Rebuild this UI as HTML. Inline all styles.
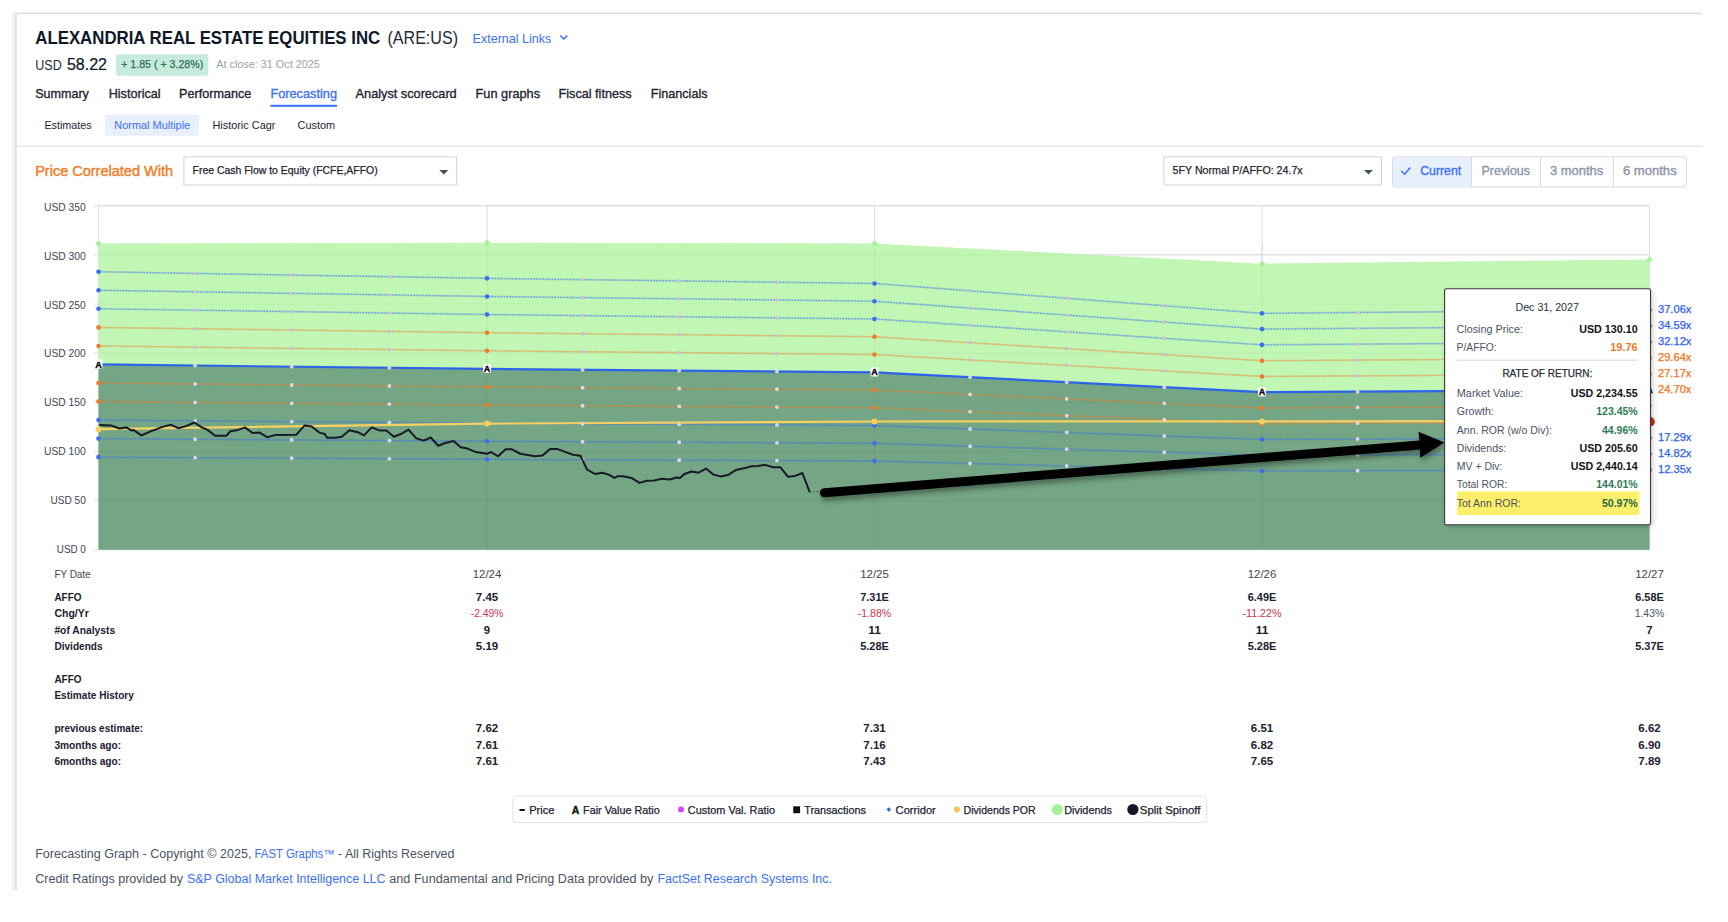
<!DOCTYPE html>
<html><head><meta charset="utf-8"><title>ARE Forecasting</title>
<style>html,body{margin:0;padding:0;background:#fff;width:1728px;height:922px;overflow:hidden}svg{display:block;font-family:"Liberation Sans", sans-serif}</style>
</head><body>
<svg width="1728" height="922" viewBox="0 0 1728 922">
<defs>
<filter id="blur" x="-5%" y="-50%" width="110%" height="200%"><feGaussianBlur stdDeviation="2.5"/></filter>
<filter id="shadow" x="-10%" y="-10%" width="130%" height="130%"><feDropShadow dx="2" dy="2" stdDeviation="2.5" flood-color="#000" flood-opacity="0.18"/></filter>
</defs>
<rect x="0" y="0" width="1728" height="922" fill="#ffffff"/>
<rect x="12" y="12" width="1690" height="878" fill="#f1f2f4"/>
<rect x="15" y="13" width="1687" height="877" rx="2" fill="#ffffff"/>
<rect x="15" y="13" width="1687" height="1.2" fill="#d9dce3"/>
<rect x="15" y="13" width="1.8" height="877" fill="#dde0e6"/>
<text x="35.3" y="43.8" font-size="19" fill="#0f1729" font-weight="bold" text-anchor="start" textLength="344.9" lengthAdjust="spacingAndGlyphs">ALEXANDRIA REAL ESTATE EQUITIES INC</text>
<text x="387.5" y="43.8" font-size="19" fill="#1f2937" font-weight="normal" text-anchor="start" textLength="70.5" lengthAdjust="spacingAndGlyphs">(ARE:US)</text>
<text x="472.6" y="42.7" font-size="13" fill="#3b6ff5" font-weight="normal" text-anchor="start" textLength="78.6" lengthAdjust="spacingAndGlyphs">External Links</text>
<path d="M560.3 35.6 L563.8 39.1 L567.3 35.6" fill="none" stroke="#3b6ff5" stroke-width="1.4"/>
<text x="35.3" y="69.8" font-size="13.8" fill="#1f2937" font-weight="normal" text-anchor="start" textLength="26.5" lengthAdjust="spacingAndGlyphs">USD</text>
<text x="66.9" y="69.8" font-size="15.6" fill="#0f1729" font-weight="normal" text-anchor="start" textLength="40.1" lengthAdjust="spacingAndGlyphs" stroke="#0f1729" stroke-width="0.2">58.22</text>
<rect x="116.1" y="54.2" width="92.2" height="21.5" rx="2" fill="#c6eadc"/>
<text x="121.2" y="67.7" font-size="11" fill="#2f6f55" font-weight="normal" text-anchor="start" textLength="82.0" lengthAdjust="spacingAndGlyphs" stroke="#2f6f55" stroke-width="0.25">+ 1.85 ( + 3.28%)</text>
<text x="216.3" y="68.0" font-size="11" fill="#9aa0b0" font-weight="normal" text-anchor="start" textLength="103.5" lengthAdjust="spacingAndGlyphs">At close: 31 Oct 2025</text>
<text x="35.2" y="97.8" font-size="13.3" fill="#1f2330" font-weight="normal" text-anchor="start" textLength="53.7" lengthAdjust="spacingAndGlyphs" stroke="#1f2330" stroke-width="0.35">Summary</text>
<text x="108.7" y="97.8" font-size="13.3" fill="#1f2330" font-weight="normal" text-anchor="start" textLength="51.9" lengthAdjust="spacingAndGlyphs" stroke="#1f2330" stroke-width="0.35">Historical</text>
<text x="179.0" y="97.8" font-size="13.3" fill="#1f2330" font-weight="normal" text-anchor="start" textLength="72.3" lengthAdjust="spacingAndGlyphs" stroke="#1f2330" stroke-width="0.35">Performance</text>
<text x="270.4" y="97.8" font-size="13.3" fill="#3b6ff5" font-weight="normal" text-anchor="start" textLength="66.6" lengthAdjust="spacingAndGlyphs" stroke="#3b6ff5" stroke-width="0.35">Forecasting</text>
<text x="355.6" y="97.8" font-size="13.3" fill="#1f2330" font-weight="normal" text-anchor="start" textLength="101.1" lengthAdjust="spacingAndGlyphs" stroke="#1f2330" stroke-width="0.35">Analyst scorecard</text>
<text x="475.6" y="97.8" font-size="13.3" fill="#1f2330" font-weight="normal" text-anchor="start" textLength="64.4" lengthAdjust="spacingAndGlyphs" stroke="#1f2330" stroke-width="0.35">Fun graphs</text>
<text x="558.5" y="97.8" font-size="13.3" fill="#1f2330" font-weight="normal" text-anchor="start" textLength="73.2" lengthAdjust="spacingAndGlyphs" stroke="#1f2330" stroke-width="0.35">Fiscal fitness</text>
<text x="650.7" y="97.8" font-size="13.3" fill="#1f2330" font-weight="normal" text-anchor="start" textLength="56.9" lengthAdjust="spacingAndGlyphs" stroke="#1f2330" stroke-width="0.35">Financials</text>
<rect x="270.4" y="104.8" width="66.6" height="2" fill="#3b6ff5"/>
<rect x="105" y="115" width="93.9" height="20.8" rx="2" fill="#e8effd"/>
<text x="44.4" y="128.9" font-size="11" fill="#1f2330" font-weight="normal" text-anchor="start" textLength="47.3" lengthAdjust="spacingAndGlyphs">Estimates</text>
<text x="114.3" y="128.9" font-size="11" fill="#3b6ff5" font-weight="normal" text-anchor="start" textLength="75.9" lengthAdjust="spacingAndGlyphs">Normal Multiple</text>
<text x="212.4" y="128.9" font-size="11" fill="#1f2330" font-weight="normal" text-anchor="start" textLength="63.0" lengthAdjust="spacingAndGlyphs">Historic Cagr</text>
<text x="297.6" y="128.9" font-size="11" fill="#1f2330" font-weight="normal" text-anchor="start" textLength="37.6" lengthAdjust="spacingAndGlyphs">Custom</text>
<rect x="16.5" y="145.6" width="1685.5" height="1.2" fill="#dfe2e8"/>
<text x="35.2" y="176.2" font-size="13.8" fill="#ef7b22" font-weight="normal" text-anchor="start" textLength="137.8" lengthAdjust="spacingAndGlyphs" stroke="#ef7b22" stroke-width="0.35">Price Correlated With</text>
<rect x="183.9" y="156.9" width="272.5" height="28" fill="#fff" stroke="#cfd3dc" stroke-width="1"/>
<text x="192.6" y="174.0" font-size="11" fill="#1f2330" font-weight="normal" text-anchor="start" textLength="185.1" lengthAdjust="spacingAndGlyphs" stroke="#1f2330" stroke-width="0.25">Free Cash Flow to Equity (FCFE,AFFO)</text>
<path d="M439.3 170 L448.3 170 L443.8 174.5 Z" fill="#4a4f5c"/>
<rect x="1163.9" y="156.9" width="217.5" height="28" fill="#fff" stroke="#cfd3dc" stroke-width="1"/>
<text x="1172.6" y="174.0" font-size="11" fill="#1f2330" font-weight="normal" text-anchor="start" textLength="130.1" lengthAdjust="spacingAndGlyphs" stroke="#1f2330" stroke-width="0.25">5FY Normal P/AFFO: 24.7x</text>
<path d="M1364 170 L1373 170 L1368.5 174.5 Z" fill="#4a4f5c"/>
<rect x="1392.4" y="156.9" width="294" height="30" rx="3" fill="#fff" stroke="#d3d7df" stroke-width="1"/>
<path d="M1395.4 157.4 H1471.6 V186.9 H1395.4 Q1392.9 186.9 1392.9 184 V160.4 Q1392.9 157.4 1395.4 157.4 Z" fill="#e8effd"/>
<rect x="1471.1" y="157" width="1" height="29.5" fill="#d3d7df"/>
<rect x="1540.0" y="157" width="1" height="29.5" fill="#d3d7df"/>
<rect x="1612.9" y="157" width="1" height="29.5" fill="#d3d7df"/>
<path d="M1401.3 171 L1404.6 174.2 L1410.3 167.6" fill="none" stroke="#3b6ff5" stroke-width="1.5"/>
<text x="1420.2" y="175.2" font-size="13" fill="#3b6ff5" font-weight="normal" text-anchor="start" textLength="41.0" lengthAdjust="spacingAndGlyphs" stroke="#3b6ff5" stroke-width="0.35">Current</text>
<text x="1481.6" y="175.2" font-size="13" fill="#8b93a7" font-weight="normal" text-anchor="start" textLength="48.3" lengthAdjust="spacingAndGlyphs" stroke="#8b93a7" stroke-width="0.35">Previous</text>
<text x="1550.0" y="175.2" font-size="13" fill="#8b93a7" font-weight="normal" text-anchor="start" textLength="53.2" lengthAdjust="spacingAndGlyphs" stroke="#8b93a7" stroke-width="0.35">3 months</text>
<text x="1622.9" y="175.2" font-size="13" fill="#8b93a7" font-weight="normal" text-anchor="start" textLength="53.8" lengthAdjust="spacingAndGlyphs" stroke="#8b93a7" stroke-width="0.35">6 months</text>
<rect x="94" y="549.30" width="1555.5" height="1" fill="#dcdfe7"/>
<rect x="94" y="500.14" width="1555.5" height="1" fill="#dcdfe7"/>
<rect x="94" y="450.99" width="1555.5" height="1" fill="#dcdfe7"/>
<rect x="94" y="401.83" width="1555.5" height="1" fill="#dcdfe7"/>
<rect x="94" y="352.67" width="1555.5" height="1" fill="#dcdfe7"/>
<rect x="94" y="303.51" width="1555.5" height="1" fill="#dcdfe7"/>
<rect x="94" y="254.36" width="1555.5" height="1" fill="#dcdfe7"/>
<rect x="94" y="205.20" width="1555.5" height="1" fill="#dcdfe7"/>
<rect x="98.0" y="205.7" width="1" height="344.1" fill="#dcdfe7"/>
<rect x="486.54620123203284" y="205.7" width="1" height="344.1" fill="#dcdfe7"/>
<rect x="874.0308008213552" y="205.7" width="1" height="344.1" fill="#dcdfe7"/>
<rect x="1261.5154004106776" y="205.7" width="1" height="344.1" fill="#dcdfe7"/>
<rect x="1649.0" y="205.7" width="1" height="344.1" fill="#dcdfe7"/>
<polygon points="98.5,243.5 487.04620123203284,242.8 874.5308008213552,243.4 1262.0154004106776,263.7 1649.5,259.5 1649.5,549.8 98.5,549.8" fill="#c1f6b4"/>
<polygon points="98.5,364.47 487.04620123203284,368.89 874.5308008213552,372.29 1262.0154004106776,392.20 1649.5,390.01 1649.5,549.8 98.5,549.8" fill="#74a584"/>
<rect x="98.5" y="500.14" width="1551" height="1" fill="#000" opacity="0.04"/>
<rect x="98.5" y="450.99" width="1551" height="1" fill="#000" opacity="0.04"/>
<rect x="98.5" y="401.83" width="1551" height="1" fill="#000" opacity="0.04"/>
<rect x="98.5" y="352.67" width="1551" height="1" fill="#000" opacity="0.04"/>
<rect x="98.5" y="303.51" width="1551" height="1" fill="#000" opacity="0.04"/>
<rect x="98.5" y="254.36" width="1551" height="1" fill="#000" opacity="0.04"/>
<rect x="98.5" y="205.20" width="1551" height="1" fill="#000" opacity="0.04"/>
<rect x="486.54620123203284" y="243" width="1" height="306.5" fill="#000" opacity="0.05"/>
<rect x="874.0308008213552" y="243" width="1" height="306.5" fill="#000" opacity="0.05"/>
<rect x="1261.5154004106776" y="243" width="1" height="306.5" fill="#000" opacity="0.05"/>
<polyline points="98.5,271.73 487.04620123203284,278.36 874.5308008213552,283.46 1262.0154004106776,313.34 1649.5,310.06" fill="none" stroke="#3a6ef2" stroke-width="2" opacity="0.18"/>
<polyline points="98.5,271.73 487.04620123203284,278.36 874.5308008213552,283.46 1262.0154004106776,313.34 1649.5,310.06" fill="none" stroke="#3a6ef2" stroke-width="1.3" stroke-dasharray="1.6 1.4" opacity="0.55"/>
<polyline points="98.5,290.26 487.04620123203284,296.45 874.5308008213552,301.21 1262.0154004106776,329.10 1649.5,326.03" fill="none" stroke="#3a6ef2" stroke-width="2" opacity="0.18"/>
<polyline points="98.5,290.26 487.04620123203284,296.45 874.5308008213552,301.21 1262.0154004106776,329.10 1649.5,326.03" fill="none" stroke="#3a6ef2" stroke-width="1.3" stroke-dasharray="1.6 1.4" opacity="0.55"/>
<polyline points="98.5,308.79 487.04620123203284,314.54 874.5308008213552,318.96 1262.0154004106776,344.86 1649.5,342.01" fill="none" stroke="#3a6ef2" stroke-width="2" opacity="0.18"/>
<polyline points="98.5,308.79 487.04620123203284,314.54 874.5308008213552,318.96 1262.0154004106776,344.86 1649.5,342.01" fill="none" stroke="#3a6ef2" stroke-width="1.3" stroke-dasharray="1.6 1.4" opacity="0.55"/>
<polyline points="98.5,327.40 487.04620123203284,332.70 874.5308008213552,336.78 1262.0154004106776,360.68 1649.5,358.06" fill="none" stroke="#f07a28" stroke-width="2" opacity="0.18"/>
<polyline points="98.5,327.40 487.04620123203284,332.70 874.5308008213552,336.78 1262.0154004106776,360.68 1649.5,358.06" fill="none" stroke="#f07a28" stroke-width="1.3" stroke-dasharray="1.6 1.4" opacity="0.55"/>
<polyline points="98.5,345.93 487.04620123203284,350.80 874.5308008213552,354.54 1262.0154004106776,376.44 1649.5,374.04" fill="none" stroke="#f07a28" stroke-width="2" opacity="0.18"/>
<polyline points="98.5,345.93 487.04620123203284,350.80 874.5308008213552,354.54 1262.0154004106776,376.44 1649.5,374.04" fill="none" stroke="#f07a28" stroke-width="1.3" stroke-dasharray="1.6 1.4" opacity="0.55"/>
<polyline points="98.5,364.47 487.04620123203284,368.89 874.5308008213552,372.29 1262.0154004106776,392.20 1649.5,390.01" fill="none" stroke="#2f62ea" stroke-width="2.2"/>
<polyline points="98.5,383.00 487.04620123203284,386.98 874.5308008213552,390.04 1262.0154004106776,407.96 1649.5,405.99" fill="none" stroke="#f07a28" stroke-width="2" opacity="0.18"/>
<polyline points="98.5,383.00 487.04620123203284,386.98 874.5308008213552,390.04 1262.0154004106776,407.96 1649.5,405.99" fill="none" stroke="#f07a28" stroke-width="1.3" stroke-dasharray="1.6 1.4" opacity="0.55"/>
<polyline points="98.5,401.53 487.04620123203284,405.07 874.5308008213552,407.79 1262.0154004106776,423.72 1649.5,421.97" fill="none" stroke="#f07a28" stroke-width="2" opacity="0.18"/>
<polyline points="98.5,401.53 487.04620123203284,405.07 874.5308008213552,407.79 1262.0154004106776,423.72 1649.5,421.97" fill="none" stroke="#f07a28" stroke-width="1.3" stroke-dasharray="1.6 1.4" opacity="0.55"/>
<polyline points="98.5,420.07 487.04620123203284,423.16 874.5308008213552,425.54 1262.0154004106776,439.48 1649.5,437.95" fill="none" stroke="#3a6ef2" stroke-width="2" opacity="0.18"/>
<polyline points="98.5,420.07 487.04620123203284,423.16 874.5308008213552,425.54 1262.0154004106776,439.48 1649.5,437.95" fill="none" stroke="#3a6ef2" stroke-width="1.3" stroke-dasharray="1.6 1.4" opacity="0.55"/>
<polyline points="98.5,438.60 487.04620123203284,441.25 874.5308008213552,443.29 1262.0154004106776,455.24 1649.5,453.93" fill="none" stroke="#3a6ef2" stroke-width="2" opacity="0.18"/>
<polyline points="98.5,438.60 487.04620123203284,441.25 874.5308008213552,443.29 1262.0154004106776,455.24 1649.5,453.93" fill="none" stroke="#3a6ef2" stroke-width="1.3" stroke-dasharray="1.6 1.4" opacity="0.55"/>
<polyline points="98.5,457.13 487.04620123203284,459.34 874.5308008213552,461.04 1262.0154004106776,471.00 1649.5,469.91" fill="none" stroke="#3a6ef2" stroke-width="2" opacity="0.18"/>
<polyline points="98.5,457.13 487.04620123203284,459.34 874.5308008213552,461.04 1262.0154004106776,471.00 1649.5,469.91" fill="none" stroke="#3a6ef2" stroke-width="1.3" stroke-dasharray="1.6 1.4" opacity="0.55"/>
<polyline points="98.5,429.2 487.04620123203284,423.6 874.5308008213552,421.5 1262.0154004106776,421.4 1649.5,421.0" fill="none" stroke="#f6d062" stroke-width="2.2"/>
<circle cx="98.5" cy="271.73" r="2.3" fill="#3a6ef2"/>
<circle cx="195.1" cy="273.37" r="1.9" fill="#cdbfd8"/>
<circle cx="291.7" cy="275.02" r="1.9" fill="#cdbfd8"/>
<circle cx="389.4" cy="276.69" r="1.9" fill="#cdbfd8"/>
<circle cx="487.0" cy="278.36" r="2.3" fill="#3a6ef2"/>
<circle cx="582.6" cy="279.61" r="1.9" fill="#cdbfd8"/>
<circle cx="679.2" cy="280.89" r="1.9" fill="#cdbfd8"/>
<circle cx="776.9" cy="282.17" r="1.9" fill="#cdbfd8"/>
<circle cx="874.5" cy="283.46" r="2.3" fill="#3a6ef2"/>
<circle cx="970.1" cy="290.83" r="1.9" fill="#cdbfd8"/>
<circle cx="1066.7" cy="298.27" r="1.9" fill="#cdbfd8"/>
<circle cx="1164.3" cy="305.80" r="1.9" fill="#cdbfd8"/>
<circle cx="1262.0" cy="313.34" r="2.3" fill="#3a6ef2"/>
<circle cx="1357.6" cy="312.53" r="1.9" fill="#cdbfd8"/>
<circle cx="1454.2" cy="311.71" r="1.9" fill="#cdbfd8"/>
<circle cx="1551.8" cy="310.88" r="1.9" fill="#cdbfd8"/>
<circle cx="1649.5" cy="310.06" r="2.3" fill="#3a6ef2"/>
<circle cx="98.5" cy="290.26" r="2.3" fill="#3a6ef2"/>
<circle cx="195.1" cy="291.80" r="1.9" fill="#cdbfd8"/>
<circle cx="291.7" cy="293.34" r="1.9" fill="#cdbfd8"/>
<circle cx="389.4" cy="294.89" r="1.9" fill="#cdbfd8"/>
<circle cx="487.0" cy="296.45" r="2.3" fill="#3a6ef2"/>
<circle cx="582.6" cy="297.62" r="1.9" fill="#cdbfd8"/>
<circle cx="679.2" cy="298.81" r="1.9" fill="#cdbfd8"/>
<circle cx="776.9" cy="300.01" r="1.9" fill="#cdbfd8"/>
<circle cx="874.5" cy="301.21" r="2.3" fill="#3a6ef2"/>
<circle cx="970.1" cy="308.09" r="1.9" fill="#cdbfd8"/>
<circle cx="1066.7" cy="315.04" r="1.9" fill="#cdbfd8"/>
<circle cx="1164.3" cy="322.07" r="1.9" fill="#cdbfd8"/>
<circle cx="1262.0" cy="329.10" r="2.3" fill="#3a6ef2"/>
<circle cx="1357.6" cy="328.34" r="1.9" fill="#cdbfd8"/>
<circle cx="1454.2" cy="327.58" r="1.9" fill="#cdbfd8"/>
<circle cx="1551.8" cy="326.81" r="1.9" fill="#cdbfd8"/>
<circle cx="1649.5" cy="326.03" r="2.3" fill="#3a6ef2"/>
<circle cx="98.5" cy="308.79" r="2.3" fill="#3a6ef2"/>
<circle cx="195.1" cy="310.22" r="1.9" fill="#cdbfd8"/>
<circle cx="291.7" cy="311.65" r="1.9" fill="#cdbfd8"/>
<circle cx="389.4" cy="313.10" r="1.9" fill="#cdbfd8"/>
<circle cx="487.0" cy="314.54" r="2.3" fill="#3a6ef2"/>
<circle cx="582.6" cy="315.63" r="1.9" fill="#cdbfd8"/>
<circle cx="679.2" cy="316.73" r="1.9" fill="#cdbfd8"/>
<circle cx="776.9" cy="317.85" r="1.9" fill="#cdbfd8"/>
<circle cx="874.5" cy="318.96" r="2.3" fill="#3a6ef2"/>
<circle cx="970.1" cy="325.35" r="1.9" fill="#cdbfd8"/>
<circle cx="1066.7" cy="331.80" r="1.9" fill="#cdbfd8"/>
<circle cx="1164.3" cy="338.33" r="1.9" fill="#cdbfd8"/>
<circle cx="1262.0" cy="344.86" r="2.3" fill="#3a6ef2"/>
<circle cx="1357.6" cy="344.15" r="1.9" fill="#cdbfd8"/>
<circle cx="1454.2" cy="343.45" r="1.9" fill="#cdbfd8"/>
<circle cx="1551.8" cy="342.73" r="1.9" fill="#cdbfd8"/>
<circle cx="1649.5" cy="342.01" r="2.3" fill="#3a6ef2"/>
<circle cx="98.5" cy="327.40" r="2.3" fill="#f07a28"/>
<circle cx="195.1" cy="328.72" r="1.9" fill="#cdbfd8"/>
<circle cx="291.7" cy="330.04" r="1.9" fill="#cdbfd8"/>
<circle cx="389.4" cy="331.37" r="1.9" fill="#cdbfd8"/>
<circle cx="487.0" cy="332.70" r="2.3" fill="#f07a28"/>
<circle cx="582.6" cy="333.71" r="1.9" fill="#cdbfd8"/>
<circle cx="679.2" cy="334.73" r="1.9" fill="#cdbfd8"/>
<circle cx="776.9" cy="335.76" r="1.9" fill="#cdbfd8"/>
<circle cx="874.5" cy="336.78" r="2.3" fill="#f07a28"/>
<circle cx="970.1" cy="342.68" r="1.9" fill="#cdbfd8"/>
<circle cx="1066.7" cy="348.63" r="1.9" fill="#cdbfd8"/>
<circle cx="1164.3" cy="354.66" r="1.9" fill="#cdbfd8"/>
<circle cx="1262.0" cy="360.68" r="2.3" fill="#f07a28"/>
<circle cx="1357.6" cy="360.03" r="1.9" fill="#cdbfd8"/>
<circle cx="1454.2" cy="359.38" r="1.9" fill="#cdbfd8"/>
<circle cx="1551.8" cy="358.72" r="1.9" fill="#cdbfd8"/>
<circle cx="1649.5" cy="358.06" r="2.3" fill="#f07a28"/>
<circle cx="98.5" cy="345.93" r="2.3" fill="#f07a28"/>
<circle cx="195.1" cy="347.14" r="1.9" fill="#cdbfd8"/>
<circle cx="291.7" cy="348.35" r="1.9" fill="#cdbfd8"/>
<circle cx="389.4" cy="349.57" r="1.9" fill="#cdbfd8"/>
<circle cx="487.0" cy="350.80" r="2.3" fill="#f07a28"/>
<circle cx="582.6" cy="351.72" r="1.9" fill="#cdbfd8"/>
<circle cx="679.2" cy="352.65" r="1.9" fill="#cdbfd8"/>
<circle cx="776.9" cy="353.59" r="1.9" fill="#cdbfd8"/>
<circle cx="874.5" cy="354.54" r="2.3" fill="#f07a28"/>
<circle cx="970.1" cy="359.94" r="1.9" fill="#cdbfd8"/>
<circle cx="1066.7" cy="365.40" r="1.9" fill="#cdbfd8"/>
<circle cx="1164.3" cy="370.92" r="1.9" fill="#cdbfd8"/>
<circle cx="1262.0" cy="376.44" r="2.3" fill="#f07a28"/>
<circle cx="1357.6" cy="375.85" r="1.9" fill="#cdbfd8"/>
<circle cx="1454.2" cy="375.25" r="1.9" fill="#cdbfd8"/>
<circle cx="1551.8" cy="374.64" r="1.9" fill="#cdbfd8"/>
<circle cx="1649.5" cy="374.04" r="2.3" fill="#f07a28"/>
<circle cx="195.1" cy="365.57" r="1.9" fill="#dcd8e4"/>
<circle cx="291.7" cy="366.67" r="1.9" fill="#dcd8e4"/>
<circle cx="389.4" cy="367.78" r="1.9" fill="#dcd8e4"/>
<circle cx="582.6" cy="369.73" r="1.9" fill="#dcd8e4"/>
<circle cx="679.2" cy="370.57" r="1.9" fill="#dcd8e4"/>
<circle cx="776.9" cy="371.43" r="1.9" fill="#dcd8e4"/>
<circle cx="970.1" cy="377.20" r="1.9" fill="#dcd8e4"/>
<circle cx="1066.7" cy="382.16" r="1.9" fill="#dcd8e4"/>
<circle cx="1164.3" cy="387.18" r="1.9" fill="#dcd8e4"/>
<circle cx="1357.6" cy="391.66" r="1.9" fill="#dcd8e4"/>
<circle cx="1454.2" cy="391.12" r="1.9" fill="#dcd8e4"/>
<circle cx="1551.8" cy="390.56" r="1.9" fill="#dcd8e4"/>
<circle cx="98.5" cy="383.00" r="2.3" fill="#f07a28"/>
<circle cx="195.1" cy="383.99" r="1.9" fill="#dcd8e4"/>
<circle cx="291.7" cy="384.98" r="1.9" fill="#dcd8e4"/>
<circle cx="389.4" cy="385.98" r="1.9" fill="#dcd8e4"/>
<circle cx="487.0" cy="386.98" r="2.3" fill="#f07a28"/>
<circle cx="582.6" cy="387.73" r="1.9" fill="#dcd8e4"/>
<circle cx="679.2" cy="388.50" r="1.9" fill="#dcd8e4"/>
<circle cx="776.9" cy="389.27" r="1.9" fill="#dcd8e4"/>
<circle cx="874.5" cy="390.04" r="2.3" fill="#f07a28"/>
<circle cx="970.1" cy="394.46" r="1.9" fill="#dcd8e4"/>
<circle cx="1066.7" cy="398.93" r="1.9" fill="#dcd8e4"/>
<circle cx="1164.3" cy="403.44" r="1.9" fill="#dcd8e4"/>
<circle cx="1262.0" cy="407.96" r="2.3" fill="#f07a28"/>
<circle cx="1357.6" cy="407.47" r="1.9" fill="#dcd8e4"/>
<circle cx="1454.2" cy="406.98" r="1.9" fill="#dcd8e4"/>
<circle cx="1551.8" cy="406.49" r="1.9" fill="#dcd8e4"/>
<circle cx="1649.5" cy="405.99" r="2.3" fill="#f07a28"/>
<circle cx="98.5" cy="401.53" r="2.3" fill="#f07a28"/>
<circle cx="195.1" cy="402.41" r="1.9" fill="#dcd8e4"/>
<circle cx="291.7" cy="403.29" r="1.9" fill="#dcd8e4"/>
<circle cx="389.4" cy="404.18" r="1.9" fill="#dcd8e4"/>
<circle cx="487.0" cy="405.07" r="2.3" fill="#f07a28"/>
<circle cx="582.6" cy="405.74" r="1.9" fill="#dcd8e4"/>
<circle cx="679.2" cy="406.42" r="1.9" fill="#dcd8e4"/>
<circle cx="776.9" cy="407.10" r="1.9" fill="#dcd8e4"/>
<circle cx="874.5" cy="407.79" r="2.3" fill="#f07a28"/>
<circle cx="970.1" cy="411.72" r="1.9" fill="#dcd8e4"/>
<circle cx="1066.7" cy="415.69" r="1.9" fill="#dcd8e4"/>
<circle cx="1164.3" cy="419.70" r="1.9" fill="#dcd8e4"/>
<circle cx="1262.0" cy="423.72" r="2.3" fill="#f07a28"/>
<circle cx="1357.6" cy="423.29" r="1.9" fill="#dcd8e4"/>
<circle cx="1454.2" cy="422.85" r="1.9" fill="#dcd8e4"/>
<circle cx="1551.8" cy="422.41" r="1.9" fill="#dcd8e4"/>
<circle cx="1649.5" cy="421.97" r="2.3" fill="#f07a28"/>
<circle cx="98.5" cy="420.07" r="2.3" fill="#3a6ef2"/>
<circle cx="195.1" cy="420.84" r="1.9" fill="#dcd8e4"/>
<circle cx="291.7" cy="421.61" r="1.9" fill="#dcd8e4"/>
<circle cx="389.4" cy="422.38" r="1.9" fill="#dcd8e4"/>
<circle cx="487.0" cy="423.16" r="2.3" fill="#3a6ef2"/>
<circle cx="582.6" cy="423.75" r="1.9" fill="#dcd8e4"/>
<circle cx="679.2" cy="424.34" r="1.9" fill="#dcd8e4"/>
<circle cx="776.9" cy="424.94" r="1.9" fill="#dcd8e4"/>
<circle cx="874.5" cy="425.54" r="2.3" fill="#3a6ef2"/>
<circle cx="970.1" cy="428.98" r="1.9" fill="#dcd8e4"/>
<circle cx="1066.7" cy="432.45" r="1.9" fill="#dcd8e4"/>
<circle cx="1164.3" cy="435.97" r="1.9" fill="#dcd8e4"/>
<circle cx="1262.0" cy="439.48" r="2.3" fill="#3a6ef2"/>
<circle cx="1357.6" cy="439.10" r="1.9" fill="#dcd8e4"/>
<circle cx="1454.2" cy="438.72" r="1.9" fill="#dcd8e4"/>
<circle cx="1551.8" cy="438.34" r="1.9" fill="#dcd8e4"/>
<circle cx="1649.5" cy="437.95" r="2.3" fill="#3a6ef2"/>
<circle cx="98.5" cy="438.60" r="2.3" fill="#3a6ef2"/>
<circle cx="195.1" cy="439.26" r="1.9" fill="#dcd8e4"/>
<circle cx="291.7" cy="439.92" r="1.9" fill="#dcd8e4"/>
<circle cx="389.4" cy="440.59" r="1.9" fill="#dcd8e4"/>
<circle cx="487.0" cy="441.25" r="2.3" fill="#3a6ef2"/>
<circle cx="582.6" cy="441.76" r="1.9" fill="#dcd8e4"/>
<circle cx="679.2" cy="442.26" r="1.9" fill="#dcd8e4"/>
<circle cx="776.9" cy="442.78" r="1.9" fill="#dcd8e4"/>
<circle cx="874.5" cy="443.29" r="2.3" fill="#3a6ef2"/>
<circle cx="970.1" cy="446.24" r="1.9" fill="#dcd8e4"/>
<circle cx="1066.7" cy="449.22" r="1.9" fill="#dcd8e4"/>
<circle cx="1164.3" cy="452.23" r="1.9" fill="#dcd8e4"/>
<circle cx="1262.0" cy="455.24" r="2.3" fill="#3a6ef2"/>
<circle cx="1357.6" cy="454.92" r="1.9" fill="#dcd8e4"/>
<circle cx="1454.2" cy="454.59" r="1.9" fill="#dcd8e4"/>
<circle cx="1551.8" cy="454.26" r="1.9" fill="#dcd8e4"/>
<circle cx="1649.5" cy="453.93" r="2.3" fill="#3a6ef2"/>
<circle cx="98.5" cy="457.13" r="2.3" fill="#3a6ef2"/>
<circle cx="195.1" cy="457.68" r="1.9" fill="#dcd8e4"/>
<circle cx="291.7" cy="458.23" r="1.9" fill="#dcd8e4"/>
<circle cx="389.4" cy="458.79" r="1.9" fill="#dcd8e4"/>
<circle cx="487.0" cy="459.34" r="2.3" fill="#3a6ef2"/>
<circle cx="582.6" cy="459.76" r="1.9" fill="#dcd8e4"/>
<circle cx="679.2" cy="460.19" r="1.9" fill="#dcd8e4"/>
<circle cx="776.9" cy="460.61" r="1.9" fill="#dcd8e4"/>
<circle cx="874.5" cy="461.04" r="2.3" fill="#3a6ef2"/>
<circle cx="970.1" cy="463.50" r="1.9" fill="#dcd8e4"/>
<circle cx="1066.7" cy="465.98" r="1.9" fill="#dcd8e4"/>
<circle cx="1164.3" cy="468.49" r="1.9" fill="#dcd8e4"/>
<circle cx="1262.0" cy="471.00" r="2.3" fill="#3a6ef2"/>
<circle cx="1357.6" cy="470.73" r="1.9" fill="#dcd8e4"/>
<circle cx="1454.2" cy="470.46" r="1.9" fill="#dcd8e4"/>
<circle cx="1551.8" cy="470.18" r="1.9" fill="#dcd8e4"/>
<circle cx="1649.5" cy="469.91" r="2.3" fill="#3a6ef2"/>
<circle cx="98.5" cy="429.2" r="3" fill="#f6d062"/>
<path d="M98.5 240.3 L101.7 243.5 L98.5 246.7 L95.3 243.5 Z" fill="#a8f09a"/>
<circle cx="487.04620123203284" cy="423.6" r="3" fill="#f6d062"/>
<path d="M487.04620123203284 239.60000000000002 L490.24620123203283 242.8 L487.04620123203284 246.0 L483.84620123203285 242.8 Z" fill="#a8f09a"/>
<circle cx="874.5308008213552" cy="421.5" r="3" fill="#f6d062"/>
<path d="M874.5308008213552 240.20000000000002 L877.7308008213553 243.4 L874.5308008213552 246.6 L871.3308008213552 243.4 Z" fill="#a8f09a"/>
<circle cx="1262.0154004106776" cy="421.4" r="3" fill="#f6d062"/>
<path d="M1262.0154004106776 260.5 L1265.2154004106776 263.7 L1262.0154004106776 266.9 L1258.8154004106775 263.7 Z" fill="#a8f09a"/>
<circle cx="1649.5" cy="421.0" r="3" fill="#f6d062"/>
<path d="M1649.5 256.3 L1652.7 259.5 L1649.5 262.7 L1646.3 259.5 Z" fill="#a8f09a"/>
<rect x="94.5" y="359.47" width="8" height="9.2" rx="1.5" fill="#fff"/>
<text x="98.5" y="367.67" font-size="9" font-weight="bold" fill="#000" stroke="#000" stroke-width="0.35" text-anchor="middle">A</text>
<rect x="483.04620123203284" y="363.89" width="8" height="9.2" rx="1.5" fill="#fff"/>
<text x="487.04620123203284" y="372.09" font-size="9" font-weight="bold" fill="#000" stroke="#000" stroke-width="0.35" text-anchor="middle">A</text>
<rect x="870.5308008213552" y="367.29" width="8" height="9.2" rx="1.5" fill="#fff"/>
<text x="874.5308008213552" y="375.49" font-size="9" font-weight="bold" fill="#000" stroke="#000" stroke-width="0.35" text-anchor="middle">A</text>
<rect x="1258.0154004106776" y="387.20" width="8" height="9.2" rx="1.5" fill="#fff"/>
<text x="1262.0154004106776" y="395.40" font-size="9" font-weight="bold" fill="#000" stroke="#000" stroke-width="0.35" text-anchor="middle">A</text>
<rect x="1645.5" y="385.01" width="8" height="9.2" rx="1.5" fill="#fff"/>
<text x="1649.5" y="393.21" font-size="9" font-weight="bold" fill="#000" stroke="#000" stroke-width="0.35" text-anchor="middle">A</text>
<polyline points="99.2,425 111,425.4 119.3,428.5 126.3,427.4 131.8,430.6 133.2,429.9 141.5,435.4 150.6,431.3 156.1,429.4 161.7,427.1 170.7,424.6 178.3,428.2 186,426.1 194.3,422.5 201.3,427.1 207.5,429.9 215.1,435.8 226.3,435.7 230.4,431.3 238,429.9 245,427.4 252.6,433 259.6,432.6 267.2,437.2 274.9,435.1 296.4,434.7 304.7,425.4 311.7,426.4 319.3,432.6 324.9,434 327,437.8 335,437.8 341.8,436.8 349.4,430.3 357.8,432.2 364,435.4 371.7,427.4 380,430.6 386.3,430.6 393.9,436.8 401.5,433.75 408.5,429.6 416.1,438.2 423.75,440.6 430.7,437.5 438.3,445.8 445.3,443 453.6,441 460.6,447.2 467.5,448.6 475.8,452.1 486.9,453.75 491.1,452.1 498,456.25 505.7,449.3 511.9,449.3 520.3,453.75 534.9,456.25 542.5,455.6 550.1,448.9 557.1,448.9 565,451.9 573.1,454.8 580.4,455.65 586.9,469.4 595,474 602.3,472.7 608.75,474.6 614.4,477.9 617.7,476.2 623.3,476.2 631.4,477.9 639.5,482.9 646.8,480.8 654.1,480.4 662.2,478.7 669.5,479.5 676.8,477.5 680,478 684.1,474.3 691.4,471.5 698.7,472.7 706,468.6 713.3,474.6 720.6,476.4 727.9,475.1 736,469.9 744.9,468.1 751.4,466.2 757.8,465.9 765.1,464.9 773.2,467.3 780.5,467.3 787.8,476.7 795.1,475.9 802.4,473 809.7,492.1" fill="none" stroke="#161a26" stroke-width="2" stroke-linejoin="round"/>
<line x1="809.7" y1="492.1" x2="821" y2="491.5" stroke="#555" stroke-width="1" stroke-dasharray="2 1.5"/>
<path d="M824.4 488.2 L1419.5 440.4 L1418.5 431.7 L1444.5 442.5 L1420.2 457.7 L1419.9 449.4 L824.4 497.2 A4.5 4.5 0 0 1 824.4 488.2 Z" fill="#000" opacity="0.35" transform="translate(1,4)" filter="url(#blur)"/>
<path d="M824.4 488.2 L1419.5 440.4 L1418.5 431.7 L1444.5 442.5 L1420.2 457.7 L1419.9 449.4 L824.4 497.2 A4.5 4.5 0 0 1 824.4 488.2 Z" fill="#000"/>
<text x="85.8" y="210.8" font-size="10.8" fill="#3f4452" font-weight="normal" text-anchor="end" textLength="41.8" lengthAdjust="spacingAndGlyphs">USD 350</text>
<text x="85.8" y="259.7" font-size="10.8" fill="#3f4452" font-weight="normal" text-anchor="end" textLength="41.8" lengthAdjust="spacingAndGlyphs">USD 300</text>
<text x="85.8" y="308.5" font-size="10.8" fill="#3f4452" font-weight="normal" text-anchor="end" textLength="41.8" lengthAdjust="spacingAndGlyphs">USD 250</text>
<text x="85.8" y="357.4" font-size="10.8" fill="#3f4452" font-weight="normal" text-anchor="end" textLength="41.8" lengthAdjust="spacingAndGlyphs">USD 200</text>
<text x="85.8" y="406.2" font-size="10.8" fill="#3f4452" font-weight="normal" text-anchor="end" textLength="41.8" lengthAdjust="spacingAndGlyphs">USD 150</text>
<text x="85.8" y="455.1" font-size="10.8" fill="#3f4452" font-weight="normal" text-anchor="end" textLength="41.8" lengthAdjust="spacingAndGlyphs">USD 100</text>
<text x="85.8" y="503.9" font-size="10.8" fill="#3f4452" font-weight="normal" text-anchor="end" textLength="35.4" lengthAdjust="spacingAndGlyphs">USD 50</text>
<text x="85.8" y="552.8" font-size="10.8" fill="#3f4452" font-weight="normal" text-anchor="end" textLength="29.0" lengthAdjust="spacingAndGlyphs">USD 0</text>
<text x="1658.0" y="313.0" font-size="10" fill="#2f62ea" font-weight="normal" text-anchor="start" textLength="33.4" lengthAdjust="spacingAndGlyphs" stroke="#2f62ea" stroke-width="0.25">37.06x</text>
<text x="1658.0" y="329.0" font-size="10" fill="#2f62ea" font-weight="normal" text-anchor="start" textLength="33.4" lengthAdjust="spacingAndGlyphs" stroke="#2f62ea" stroke-width="0.25">34.59x</text>
<text x="1658.0" y="344.9" font-size="10" fill="#2f62ea" font-weight="normal" text-anchor="start" textLength="33.4" lengthAdjust="spacingAndGlyphs" stroke="#2f62ea" stroke-width="0.25">32.12x</text>
<text x="1658.0" y="360.8" font-size="10" fill="#f0741f" font-weight="normal" text-anchor="start" textLength="33.4" lengthAdjust="spacingAndGlyphs" stroke="#f0741f" stroke-width="0.25">29.64x</text>
<text x="1658.0" y="376.7" font-size="10" fill="#f0741f" font-weight="normal" text-anchor="start" textLength="33.4" lengthAdjust="spacingAndGlyphs" stroke="#f0741f" stroke-width="0.25">27.17x</text>
<text x="1658.0" y="392.5" font-size="10" fill="#f0741f" font-weight="normal" text-anchor="start" textLength="33.4" lengthAdjust="spacingAndGlyphs" stroke="#f0741f" stroke-width="0.25">24.70x</text>
<text x="1658.0" y="440.7" font-size="10" fill="#2f62ea" font-weight="normal" text-anchor="start" textLength="33.4" lengthAdjust="spacingAndGlyphs" stroke="#2f62ea" stroke-width="0.25">17.29x</text>
<text x="1658.0" y="456.6" font-size="10" fill="#2f62ea" font-weight="normal" text-anchor="start" textLength="33.4" lengthAdjust="spacingAndGlyphs" stroke="#2f62ea" stroke-width="0.25">14.82x</text>
<text x="1658.0" y="472.5" font-size="10" fill="#2f62ea" font-weight="normal" text-anchor="start" textLength="33.4" lengthAdjust="spacingAndGlyphs" stroke="#2f62ea" stroke-width="0.25">12.35x</text>
<circle cx="1650.3" cy="421.7" r="4.6" fill="#d42a1e"/>
<rect x="1444.6" y="288.8" width="205.9" height="236" rx="1.5" fill="#fff" stroke="#383838" stroke-width="1.1" filter="url(#shadow)"/>
<text x="1547.2" y="310.6" font-size="10" fill="#2a2f3a" font-weight="normal" text-anchor="middle" textLength="63.5" lengthAdjust="spacingAndGlyphs">Dec 31, 2027</text>
<text x="1456.6" y="332.7" font-size="10" fill="#4b5262" font-weight="normal" text-anchor="start" textLength="66.4" lengthAdjust="spacingAndGlyphs">Closing Price:</text>
<text x="1637.7" y="332.6" font-size="10" fill="#111318" font-weight="bold" text-anchor="end" textLength="58.5" lengthAdjust="spacingAndGlyphs">USD 130.10</text>
<text x="1456.6" y="350.6" font-size="10" fill="#4b5262" font-weight="normal" text-anchor="start" textLength="40.0" lengthAdjust="spacingAndGlyphs">P/AFFO:</text>
<text x="1637.7" y="350.6" font-size="10" fill="#f07a28" font-weight="bold" text-anchor="end" textLength="27.5" lengthAdjust="spacingAndGlyphs">19.76</text>
<rect x="1456.6" y="359.6" width="181.1" height="1" fill="#d4d6dc"/>
<text x="1547.3" y="377.0" font-size="10" fill="#2a2f3a" font-weight="normal" text-anchor="middle" textLength="89.8" lengthAdjust="spacingAndGlyphs" stroke="#2a2f3a" stroke-width="0.25">RATE OF RETURN:</text>
<rect x="1457.1" y="491.4" width="182.3" height="23.6" fill="#fff06b"/>
<text x="1456.8" y="396.9" font-size="10" fill="#4b5262" font-weight="normal" text-anchor="start" textLength="66.2" lengthAdjust="spacingAndGlyphs">Market Value:</text>
<text x="1637.7" y="396.9" font-size="10" fill="#111318" font-weight="bold" text-anchor="end" textLength="67.0" lengthAdjust="spacingAndGlyphs">USD 2,234.55</text>
<text x="1456.8" y="415.1" font-size="10" fill="#4b5262" font-weight="normal" text-anchor="start" textLength="37.0" lengthAdjust="spacingAndGlyphs">Growth:</text>
<text x="1637.7" y="415.1" font-size="10" fill="#2e7a55" font-weight="bold" text-anchor="end" textLength="41.5" lengthAdjust="spacingAndGlyphs">123.45%</text>
<text x="1456.8" y="433.5" font-size="10" fill="#4b5262" font-weight="normal" text-anchor="start" textLength="95.0" lengthAdjust="spacingAndGlyphs">Ann. ROR (w/o Div):</text>
<text x="1637.7" y="433.5" font-size="10" fill="#2e7a55" font-weight="bold" text-anchor="end" textLength="35.8" lengthAdjust="spacingAndGlyphs">44.96%</text>
<text x="1456.8" y="451.7" font-size="10" fill="#4b5262" font-weight="normal" text-anchor="start" textLength="49.5" lengthAdjust="spacingAndGlyphs">Dividends:</text>
<text x="1637.7" y="451.7" font-size="10" fill="#111318" font-weight="bold" text-anchor="end" textLength="58.2" lengthAdjust="spacingAndGlyphs">USD 205.60</text>
<text x="1456.8" y="470.1" font-size="10" fill="#4b5262" font-weight="normal" text-anchor="start" textLength="45.6" lengthAdjust="spacingAndGlyphs">MV + Div:</text>
<text x="1637.7" y="470.1" font-size="10" fill="#111318" font-weight="bold" text-anchor="end" textLength="67.0" lengthAdjust="spacingAndGlyphs">USD 2,440.14</text>
<text x="1456.8" y="488.3" font-size="10" fill="#4b5262" font-weight="normal" text-anchor="start" textLength="50.5" lengthAdjust="spacingAndGlyphs">Total ROR:</text>
<text x="1637.7" y="488.3" font-size="10" fill="#2e7a55" font-weight="bold" text-anchor="end" textLength="41.5" lengthAdjust="spacingAndGlyphs">144.01%</text>
<text x="1456.8" y="506.7" font-size="10" fill="#4b5262" font-weight="normal" text-anchor="start" textLength="64.1" lengthAdjust="spacingAndGlyphs">Tot Ann ROR:</text>
<text x="1637.7" y="506.7" font-size="10" fill="#256b45" font-weight="bold" text-anchor="end" textLength="35.8" lengthAdjust="spacingAndGlyphs">50.97%</text>
<text x="54.4" y="578.0" font-size="10" fill="#3f4452" font-weight="normal" text-anchor="start" textLength="36.2" lengthAdjust="spacingAndGlyphs">FY Date</text>
<text x="487.0" y="578.0" font-size="10" fill="#3f4452" font-weight="normal" text-anchor="middle" textLength="28.6" lengthAdjust="spacingAndGlyphs">12/24</text>
<text x="874.5" y="578.0" font-size="10" fill="#3f4452" font-weight="normal" text-anchor="middle" textLength="28.6" lengthAdjust="spacingAndGlyphs">12/25</text>
<text x="1262.0" y="578.0" font-size="10" fill="#3f4452" font-weight="normal" text-anchor="middle" textLength="28.6" lengthAdjust="spacingAndGlyphs">12/26</text>
<text x="1649.5" y="578.0" font-size="10" fill="#3f4452" font-weight="normal" text-anchor="middle" textLength="28.6" lengthAdjust="spacingAndGlyphs">12/27</text>
<text x="54.4" y="600.6" font-size="10" fill="#1c2030" font-weight="bold" text-anchor="start" textLength="27.1" lengthAdjust="spacingAndGlyphs">AFFO</text>
<text x="487.0" y="600.6" font-size="10" fill="#1c2030" font-weight="bold" text-anchor="middle" textLength="22.4" lengthAdjust="spacingAndGlyphs">7.45</text>
<text x="874.5" y="600.6" font-size="10" fill="#1c2030" font-weight="bold" text-anchor="middle" textLength="28.6" lengthAdjust="spacingAndGlyphs">7.31E</text>
<text x="1262.0" y="600.6" font-size="10" fill="#1c2030" font-weight="bold" text-anchor="middle" textLength="28.6" lengthAdjust="spacingAndGlyphs">6.49E</text>
<text x="1649.5" y="600.6" font-size="10" fill="#1c2030" font-weight="bold" text-anchor="middle" textLength="28.6" lengthAdjust="spacingAndGlyphs">6.58E</text>
<text x="54.4" y="616.6" font-size="10" fill="#1c2030" font-weight="bold" text-anchor="start" textLength="34.4" lengthAdjust="spacingAndGlyphs">Chg/Yr</text>
<text x="487.0" y="616.6" font-size="10" fill="#c9334f" font-weight="normal" text-anchor="middle" textLength="32.5" lengthAdjust="spacingAndGlyphs">-2.49%</text>
<text x="874.5" y="616.6" font-size="10" fill="#c9334f" font-weight="normal" text-anchor="middle" textLength="33.3" lengthAdjust="spacingAndGlyphs">-1.88%</text>
<text x="1262.0" y="616.6" font-size="10" fill="#c9334f" font-weight="normal" text-anchor="middle" textLength="39.0" lengthAdjust="spacingAndGlyphs">-11.22%</text>
<text x="1649.5" y="616.6" font-size="10" fill="#4f5563" font-weight="normal" text-anchor="middle" textLength="29.7" lengthAdjust="spacingAndGlyphs">1.43%</text>
<text x="54.4" y="633.7" font-size="10" fill="#1c2030" font-weight="bold" text-anchor="start" textLength="60.8" lengthAdjust="spacingAndGlyphs">#of Analysts</text>
<text x="487.0" y="633.7" font-size="10" fill="#1c2030" font-weight="bold" text-anchor="middle" textLength="6.3" lengthAdjust="spacingAndGlyphs">9</text>
<text x="874.5" y="633.7" font-size="10" fill="#1c2030" font-weight="bold" text-anchor="middle" textLength="12.6" lengthAdjust="spacingAndGlyphs">11</text>
<text x="1262.0" y="633.7" font-size="10" fill="#1c2030" font-weight="bold" text-anchor="middle" textLength="12.6" lengthAdjust="spacingAndGlyphs">11</text>
<text x="1649.5" y="633.7" font-size="10" fill="#1c2030" font-weight="bold" text-anchor="middle" textLength="6.3" lengthAdjust="spacingAndGlyphs">7</text>
<text x="54.4" y="649.7" font-size="10" fill="#1c2030" font-weight="bold" text-anchor="start" textLength="48.2" lengthAdjust="spacingAndGlyphs">Dividends</text>
<text x="487.0" y="649.7" font-size="10" fill="#1c2030" font-weight="bold" text-anchor="middle" textLength="22.4" lengthAdjust="spacingAndGlyphs">5.19</text>
<text x="874.5" y="649.7" font-size="10" fill="#1c2030" font-weight="bold" text-anchor="middle" textLength="28.6" lengthAdjust="spacingAndGlyphs">5.28E</text>
<text x="1262.0" y="649.7" font-size="10" fill="#1c2030" font-weight="bold" text-anchor="middle" textLength="28.6" lengthAdjust="spacingAndGlyphs">5.28E</text>
<text x="1649.5" y="649.7" font-size="10" fill="#1c2030" font-weight="bold" text-anchor="middle" textLength="28.6" lengthAdjust="spacingAndGlyphs">5.37E</text>
<text x="54.4" y="682.8" font-size="10" fill="#1c2030" font-weight="bold" text-anchor="start" textLength="27.1" lengthAdjust="spacingAndGlyphs">AFFO</text>
<text x="54.4" y="699.0" font-size="10" fill="#1c2030" font-weight="bold" text-anchor="start" textLength="79.5" lengthAdjust="spacingAndGlyphs">Estimate History</text>
<text x="54.4" y="732.1" font-size="10" fill="#1c2030" font-weight="bold" text-anchor="start" textLength="88.8" lengthAdjust="spacingAndGlyphs">previous estimate:</text>
<text x="487.0" y="732.1" font-size="10" fill="#1c2030" font-weight="bold" text-anchor="middle" textLength="22.4" lengthAdjust="spacingAndGlyphs">7.62</text>
<text x="874.5" y="732.1" font-size="10" fill="#1c2030" font-weight="bold" text-anchor="middle" textLength="22.4" lengthAdjust="spacingAndGlyphs">7.31</text>
<text x="1262.0" y="732.1" font-size="10" fill="#1c2030" font-weight="bold" text-anchor="middle" textLength="22.4" lengthAdjust="spacingAndGlyphs">6.51</text>
<text x="1649.5" y="732.1" font-size="10" fill="#1c2030" font-weight="bold" text-anchor="middle" textLength="22.4" lengthAdjust="spacingAndGlyphs">6.62</text>
<text x="54.4" y="749.0" font-size="10" fill="#1c2030" font-weight="bold" text-anchor="start" textLength="66.8" lengthAdjust="spacingAndGlyphs">3months ago:</text>
<text x="487.0" y="749.0" font-size="10" fill="#1c2030" font-weight="bold" text-anchor="middle" textLength="22.4" lengthAdjust="spacingAndGlyphs">7.61</text>
<text x="874.5" y="749.0" font-size="10" fill="#1c2030" font-weight="bold" text-anchor="middle" textLength="22.4" lengthAdjust="spacingAndGlyphs">7.16</text>
<text x="1262.0" y="749.0" font-size="10" fill="#1c2030" font-weight="bold" text-anchor="middle" textLength="22.4" lengthAdjust="spacingAndGlyphs">6.82</text>
<text x="1649.5" y="749.0" font-size="10" fill="#1c2030" font-weight="bold" text-anchor="middle" textLength="22.4" lengthAdjust="spacingAndGlyphs">6.90</text>
<text x="54.4" y="765.2" font-size="10" fill="#1c2030" font-weight="bold" text-anchor="start" textLength="66.8" lengthAdjust="spacingAndGlyphs">6months ago:</text>
<text x="487.0" y="765.2" font-size="10" fill="#1c2030" font-weight="bold" text-anchor="middle" textLength="22.4" lengthAdjust="spacingAndGlyphs">7.61</text>
<text x="874.5" y="765.2" font-size="10" fill="#1c2030" font-weight="bold" text-anchor="middle" textLength="22.4" lengthAdjust="spacingAndGlyphs">7.43</text>
<text x="1262.0" y="765.2" font-size="10" fill="#1c2030" font-weight="bold" text-anchor="middle" textLength="22.4" lengthAdjust="spacingAndGlyphs">7.65</text>
<text x="1649.5" y="765.2" font-size="10" fill="#1c2030" font-weight="bold" text-anchor="middle" textLength="22.4" lengthAdjust="spacingAndGlyphs">7.89</text>
<rect x="512.8" y="796.1" width="693.6" height="26.3" rx="4" fill="#fff" stroke="#dfe1e6" stroke-width="1"/>
<rect x="519.5" y="809" width="5.3" height="2" fill="#111"/>
<text x="529.2" y="813.9" font-size="11" fill="#1f2330" font-weight="normal" text-anchor="start" textLength="25.3" lengthAdjust="spacingAndGlyphs" stroke="#1f2330" stroke-width="0.25">Price</text>
<text x="575.6" y="813.6" font-size="10.5" font-weight="bold" fill="#111" stroke="#111" stroke-width="0.3" text-anchor="middle">A</text>
<text x="583.1" y="813.9" font-size="11" fill="#1f2330" font-weight="normal" text-anchor="start" textLength="76.6" lengthAdjust="spacingAndGlyphs" stroke="#1f2330" stroke-width="0.25">Fair Value Ratio</text>
<circle cx="681" cy="809.5" r="3" fill="#d946ef"/>
<text x="687.8" y="813.9" font-size="11" fill="#1f2330" font-weight="normal" text-anchor="start" textLength="87.2" lengthAdjust="spacingAndGlyphs" stroke="#1f2330" stroke-width="0.25">Custom Val. Ratio</text>
<rect x="793.2" y="806.3" width="6.9" height="6.9" fill="#111"/>
<text x="804.2" y="813.9" font-size="11" fill="#1f2330" font-weight="normal" text-anchor="start" textLength="61.8" lengthAdjust="spacingAndGlyphs" stroke="#1f2330" stroke-width="0.25">Transactions</text>
<path d="M888.8 807.2 L891.1 809.5 L888.8 811.8 L886.5 809.5 Z" fill="#2f62ea"/>
<text x="895.6" y="813.9" font-size="11" fill="#1f2330" font-weight="normal" text-anchor="start" textLength="40.2" lengthAdjust="spacingAndGlyphs" stroke="#1f2330" stroke-width="0.25">Corridor</text>
<circle cx="956.9" cy="809.5" r="3" fill="#f5c451"/>
<text x="963.6" y="813.9" font-size="11" fill="#1f2330" font-weight="normal" text-anchor="start" textLength="72.1" lengthAdjust="spacingAndGlyphs" stroke="#1f2330" stroke-width="0.25">Dividends POR</text>
<circle cx="1057.4" cy="809.5" r="5.6" fill="#a8f09a"/>
<text x="1064.2" y="813.9" font-size="11" fill="#1f2330" font-weight="normal" text-anchor="start" textLength="47.9" lengthAdjust="spacingAndGlyphs" stroke="#1f2330" stroke-width="0.25">Dividends</text>
<circle cx="1132.9" cy="809.5" r="5.6" fill="#141826"/>
<text x="1139.8" y="813.9" font-size="11" fill="#1f2330" font-weight="normal" text-anchor="start" textLength="60.7" lengthAdjust="spacingAndGlyphs" stroke="#1f2330" stroke-width="0.25">Split Spinoff</text>
<text x="35.2" y="858.4" font-size="12" fill="#4b5262" font-weight="normal" text-anchor="start" textLength="216.2" lengthAdjust="spacingAndGlyphs">Forecasting Graph - Copyright © 2025,</text>
<text x="254.5" y="858.4" font-size="12" fill="#3b6ff5" font-weight="normal" text-anchor="start" textLength="80.2" lengthAdjust="spacingAndGlyphs">FAST Graphs™</text>
<text x="338.0" y="858.4" font-size="12" fill="#4b5262" font-weight="normal" text-anchor="start" textLength="116.5" lengthAdjust="spacingAndGlyphs">- All Rights Reserved</text>
<text x="35.2" y="883.0" font-size="12" fill="#4b5262" font-weight="normal" text-anchor="start" textLength="147.9" lengthAdjust="spacingAndGlyphs">Credit Ratings provided by</text>
<text x="187.0" y="883.0" font-size="12" fill="#3b6ff5" font-weight="normal" text-anchor="start" textLength="198.5" lengthAdjust="spacingAndGlyphs">S&amp;P Global Market Intelligence LLC</text>
<text x="389.3" y="883.0" font-size="12" fill="#4b5262" font-weight="normal" text-anchor="start" textLength="264.1" lengthAdjust="spacingAndGlyphs">and Fundamental and Pricing Data provided by</text>
<text x="657.4" y="883.0" font-size="12" fill="#3b6ff5" font-weight="normal" text-anchor="start" textLength="174.6" lengthAdjust="spacingAndGlyphs">FactSet Research Systems Inc.</text>
</svg>
</body></html>
